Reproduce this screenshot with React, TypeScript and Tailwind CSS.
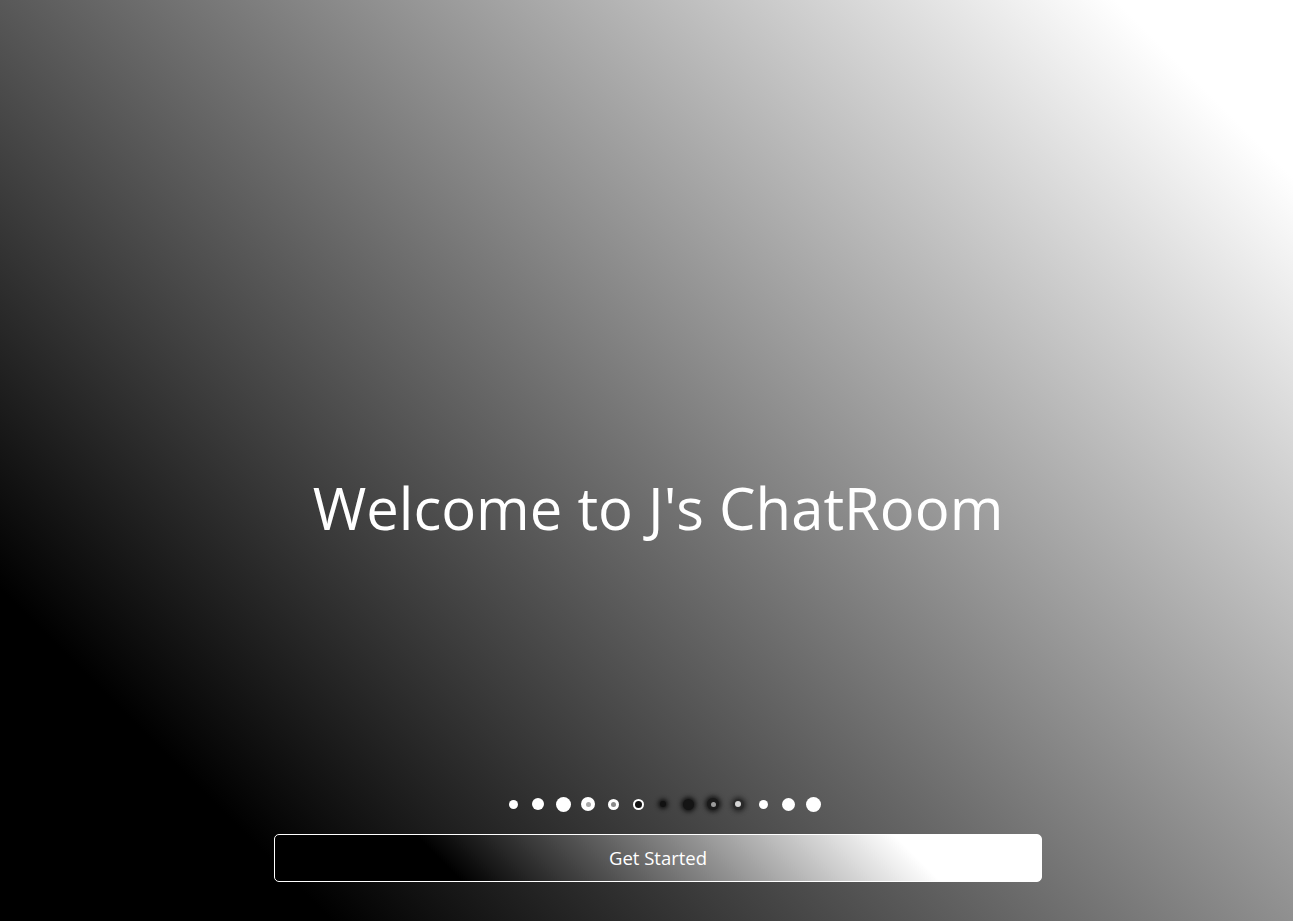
import React from "react";

type Dot = { size: number; color: string; core?: number; coreColor?: string; blur?: boolean };

const dots: Dot[] = [
  { size: 9, color: "#ffffff" },
  { size: 12, color: "#ffffff" },
  { size: 15, color: "#ffffff" },
  { size: 14, color: "#ffffff", core: 5, coreColor: "#a8a8a8" },
  { size: 11, color: "#ffffff", core: 5, coreColor: "#8a8a8a" },
  { size: 11, color: "#ffffff", core: 7, coreColor: "#111111" },
  { size: 6, color: "#111111", blur: true },
  { size: 11, color: "#141414", blur: true },
  { size: 12, color: "#1a1a1a", core: 5, coreColor: "#9a9a9a", blur: true },
  { size: 11, color: "#2a2a2a", core: 6, coreColor: "#d4d4d4", blur: true },
  { size: 9, color: "#ffffff" },
  { size: 13, color: "#ffffff" },
  { size: 15, color: "#ffffff" },
];

export default function App() {
  return (
    <div
      className="h-screen w-full overflow-hidden flex flex-col items-center justify-end pb-[39px] pl-[23px] bg-[linear-gradient(45deg,#000000_15%,#ffffff_92%)] text-white"
      style={{ fontFamily: '"Open Sans", "Noto Sans", sans-serif' }}
    >
      {/* Title */}
      <h1 className="text-[58px] leading-[67px] font-normal text-white">
        Welcome to J's ChatRoom
      </h1>

      {/* Loading dots */}
      <div className="mt-[255px] ml-[10px] flex items-center h-4">
        {dots.map((d, i) => (
          <div key={i} className="w-[25px] flex items-center justify-center">
            <span
              className="rounded-full flex items-center justify-center"
              style={{
                width: d.size,
                height: d.size,
                background: d.color,
                boxShadow: d.blur ? `0 0 4px 2px ${d.color}` : undefined,
              }}
            >
              {d.core ? (
                <span
                  className="rounded-full"
                  style={{ width: d.core, height: d.core, background: d.coreColor }}
                />
              ) : null}
            </span>
          </div>
        ))}
      </div>

      {/* Button */}
      <button className="mt-[22px] w-[768px] h-[48px] rounded-[5px] border border-white bg-[linear-gradient(45deg,#000000_23%,#ffffff_82%)] text-white text-[18.5px] flex items-center justify-center">
        Get Started
      </button>
    </div>
  );
}
